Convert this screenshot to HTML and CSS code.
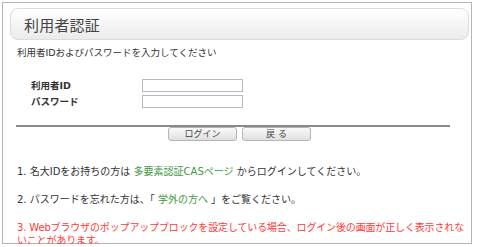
FILE: index.html
```html
<!DOCTYPE html>
<html lang="ja">
<head>
  <meta charset="UTF-8" />
  <title>利用者認証</title>
  <link rel="stylesheet" href="styles.css">
</head>
<body>
  <div class="frame">
    <header class="title-bar">
      <h1>利用者認証</h1>
    </header>

    <p class="lead">利用者IDおよびパスワードを入力してください</p>

    <form class="login-form" onsubmit="return false;">
      <div class="field">
        <label for="uid">利用者ID</label>
        <input type="text" id="uid">
      </div>
      <div class="field">
        <label for="pwd">パスワード</label>
        <input type="password" id="pwd">
      </div>

      <div class="actions">
        <button type="submit" class="btn">ログイン</button>
        <button type="button" class="btn">戻 る</button>
      </div>
    </form>

    <ol class="notes">
      <li>1. 名大IDをお持ちの方は <a href="#">多要素認証CASページ</a> からログインしてください。</li>
      <li>2. パスワードを忘れた方は、「 <a href="#">学外の方へ</a> 」をご覧ください。</li>
      <li class="warn">3. Webブラウザのポップアップブロックを設定している場合、ログイン後の画面が正しく表示されないことがあります。</li>
    </ol>
  </div>
</body>
</html>
```

FILE: styles.css
```css
body {
  margin: 0;
  background: #fff;
  color: #333;
  font-family: "DejaVu Sans", "Noto Sans CJK JP", sans-serif;
}

.frame {
  margin: 2px 0 0 2px;
  width: 468px;
  height: 240px;
  border: 1px solid #b4b4b4;
}

.title-bar {
  margin: 5px 2px 0 7px;
  height: 30px;
  border: 1px solid #dcdcdc;
  border-radius: 8px;
  background: linear-gradient(to bottom, #ffffff, #ebebeb);
  display: flex;
  align-items: center;
}

.title-bar h1 {
  margin: 0 0 0 13px;
  font-family: "Noto Sans CJK JP", sans-serif;
  font-size: 15px;
  font-weight: normal;
  color: #444;
  letter-spacing: 0.2px;
}

.lead {
  margin: 6px 0 0 14px;
  font-size: 9.5px;
  line-height: 14px;
  color: #333;
}

.login-form {
  margin-top: 17px;
}

.field {
  display: flex;
  align-items: center;
  height: 16px;
}

.field label {
  width: 111px;
  margin-left: 28px;
  font-size: 9.5px;
  font-weight: bold;
  color: #333;
}

.field input {
  width: 97px;
  height: 9px;
  padding: 1px;
  border: 1px solid #b8b8c4;
  background: #fff;
}

.actions {
  margin: 16px 0 0 13px;
  width: 434px;
  border-top: 2px solid #8a8a8a;
  display: flex;
  justify-content: center;
  gap: 5px;
  padding-left: 13px;
  box-sizing: border-box;
}

.btn {
  width: 69px;
  height: 14px;
  padding: 0;
  border: 1px solid #b4b4b4;
  border-radius: 3px;
  background: linear-gradient(to bottom, #fafafa, #e0e0e0);
  font-family: "DejaVu Sans", "Noto Sans CJK JP", sans-serif;
  font-size: 9px;
  color: #444;
  line-height: 12px;
}

.notes {
  list-style: none;
  margin: 24px 0 0 14px;
  padding: 0;
  font-size: 10px;
  line-height: 13px;
}

.notes li {
  margin-bottom: 15px;
}

.notes a {
  color: #3f9a3f;
  text-decoration: none;
}

.notes .warn {
  color: #ff3a3a;
  letter-spacing: -0.15px;
  padding-right: 6px;
  word-break: break-all;
  margin-bottom: 0;
}
```
